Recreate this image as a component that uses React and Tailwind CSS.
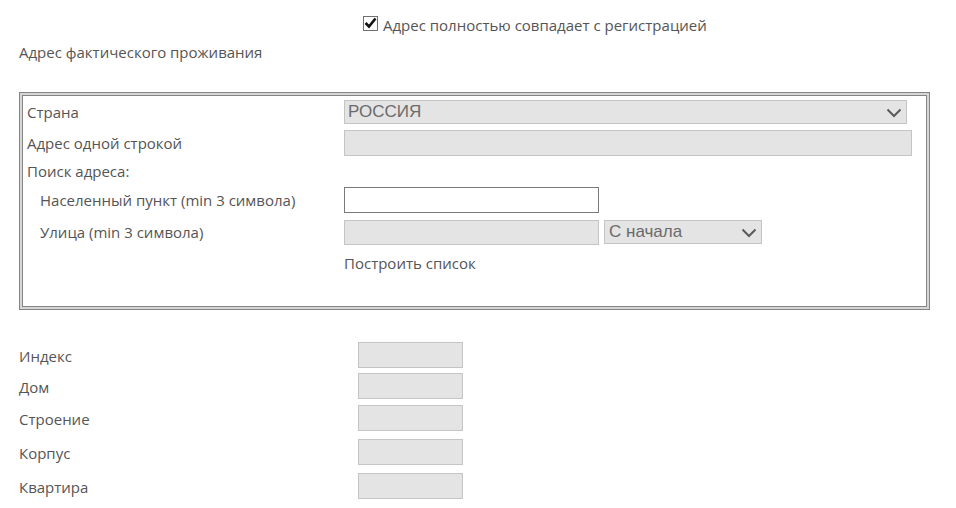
import React from "react";

const Chevron = ({ className }) => (
  <svg className={className} width="16" height="10" viewBox="0 0 16 10" fill="none">
    <path d="M1.5 1.5 L8 8 L14.5 1.5" stroke="#5a5a5a" strokeWidth="2" />
  </svg>
);

function Field({ className }) {
  return <div className={"border border-[#c4c4c4] bg-[#e4e4e4] " + className} />;
}

const rows = [
  ["Индекс", ""],
  ["Дом", "mt-[5px]"],
  ["Строение", "mt-[6px]"],
  ["Корпус", "mt-[8px]"],
  ["Квартира", "mt-[8px]"],
];

export default function App() {
  const font = { fontFamily: '"Open Sans", "Noto Sans", sans-serif' };
  const arial = { fontFamily: '"Liberation Sans", Arial, sans-serif' };
  return (
    <div className="w-[956px] h-[508px] bg-white text-[#555] text-[15px] overflow-hidden" style={font}>
      <div className="flex items-center pl-[363px] pt-[15px] h-[31px]">
        <div className="w-[15px] h-[15px] border border-[#707070] bg-white flex items-center justify-center">
          <svg width="13" height="12" viewBox="0 0 13 12">
            <path d="M1.5 6 L5 9.5 L11.5 1.5" stroke="#111" strokeWidth="2.6" fill="none" />
          </svg>
        </div>
        <span className="ml-[5px] mt-[4px] text-[15px] text-[#555] leading-none">Адрес полностью совпадает с регистрацией</span>
      </div>
      <div className="pl-[19px] mt-[11px] leading-[20px]">Адрес фактического проживания</div>

      <div className="ml-[19px] mt-[30px] w-[911px] h-[218px] border border-[#858585] bg-[#d6d6d6] p-[2px]">
        <div className="h-full border border-[#858585] bg-white pl-[4px] pr-[14px] pt-[4px]">
          <div className="flex items-center h-[24px]">
            <div className="w-[317px]">Страна</div>
            <div className="relative flex-1 mr-[5px] h-[24px] border border-[#c4c4c4] bg-[#e4e4e4] flex items-center pl-[3px]">
              <span className="text-[17px] text-[#6a6a6a]" style={arial}>РОССИЯ</span>
              <Chevron className="absolute right-[4px] top-[7px]" />
            </div>
          </div>
          <div className="flex items-center h-[26px] mt-[6px]">
            <div className="w-[317px]">Адрес одной строкой</div>
            <Field className="flex-1 h-[26px]" />
          </div>
          <div className="flex items-center h-[20px] mt-[5px]">Поиск адреса:</div>
          <div className="flex items-center h-[26px] mt-[6px]">
            <div className="w-[317px] pl-[13px]">Населенный пункт (min 3 символа)</div>
            <div className="w-[255px] h-[26px] border border-[#7a7a7a] bg-white" />
          </div>
          <div className="flex items-center h-[25px] mt-[7px]">
            <div className="w-[317px] pl-[13px]">Улица (min 3 символа)</div>
            <Field className="w-[255px] h-[25px]" />
            <div className="relative ml-[5px] w-[158px] h-[24px] border border-[#c4c4c4] bg-[#e4e4e4] flex items-center pl-[4px] self-start">
              <span className="text-[17px] text-[#6a6a6a]" style={arial}>С начала</span>
              <Chevron className="absolute right-[4px] top-[7px]" />
            </div>
          </div>
          <div className="flex items-center h-[20px] mt-[8px] pl-[317px]">Построить список</div>
        </div>
      </div>

      <div className="pl-[19px] mt-[32px]">
        {rows.map(([label, mt]) => (
          <div key={label} className={"flex items-center h-[26px] " + mt}>
            <div className="w-[339px] pt-[2px]">{label}</div>
            <Field className="w-[105px] h-[26px]" />
          </div>
        ))}
      </div>
    </div>
  );
}
